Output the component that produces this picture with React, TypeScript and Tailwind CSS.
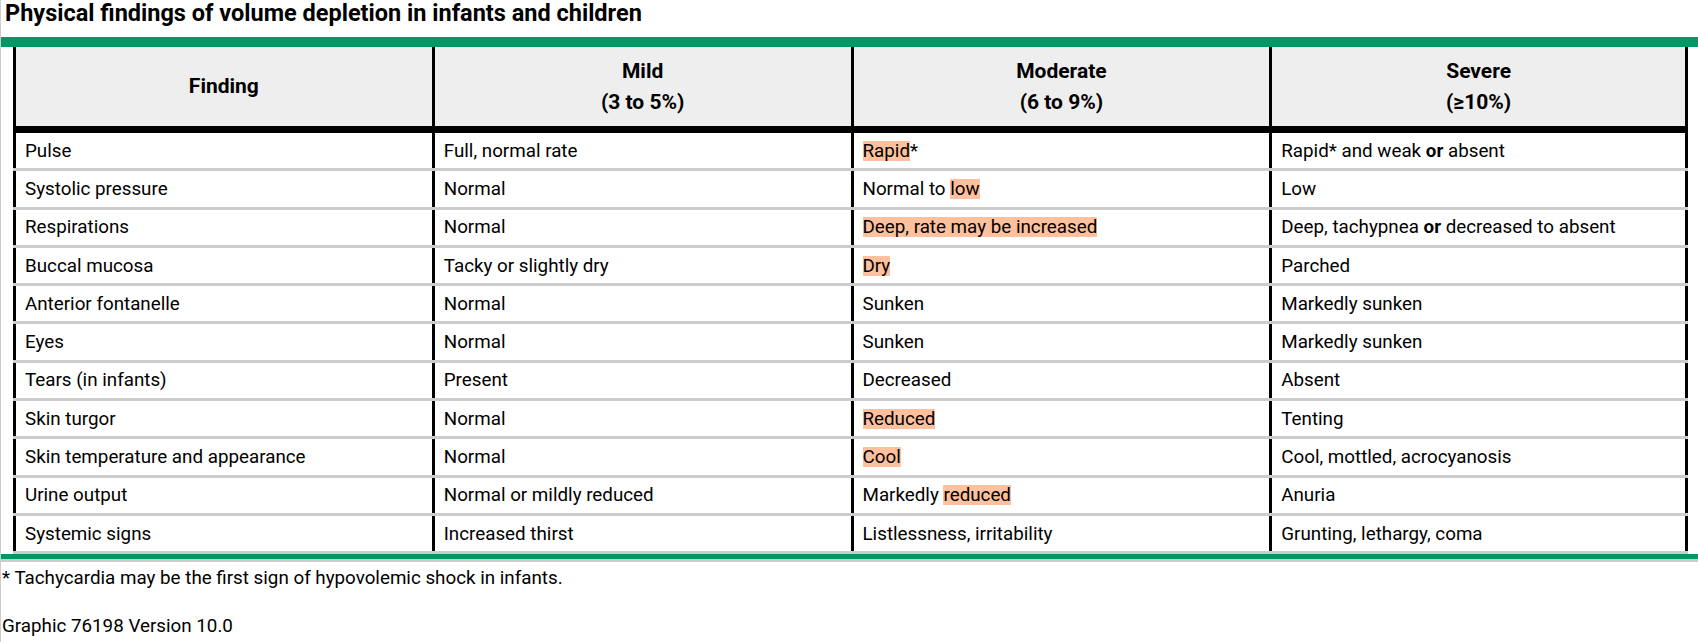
import React from "react"

type Cell = React.ReactNode

const Hl = ({ children }: { children: React.ReactNode }) => (
  <span className="inline-block bg-[#fec09d] leading-[20px]">{children}</span>
)

const rows: Cell[][] = [
  ["Pulse", "Full, normal rate", <><Hl>Rapid</Hl>*</>, <>Rapid* and weak <b>or</b> absent</>],
  ["Systolic pressure", "Normal", <>Normal to <Hl>low</Hl></>, "Low"],
  ["Respirations", "Normal", <Hl>Deep, rate may be increased</Hl>, <>Deep, tachypnea <b>or</b> decreased to absent</>],
  ["Buccal mucosa", "Tacky or slightly dry", <Hl>Dry</Hl>, "Parched"],
  ["Anterior fontanelle", "Normal", "Sunken", "Markedly sunken"],
  ["Eyes", "Normal", "Sunken", "Markedly sunken"],
  ["Tears (in infants)", "Present", "Decreased", "Absent"],
  ["Skin turgor", "Normal", <Hl>Reduced</Hl>, "Tenting"],
  ["Skin temperature and appearance", "Normal", <Hl>Cool</Hl>, "Cool, mottled, acrocyanosis"],
  ["Urine output", "Normal or mildly reduced", <>Markedly <Hl>reduced</Hl></>, "Anuria"],
  ["Systemic signs", "Increased thirst", "Listlessness, irritability", "Grunting, lethargy, coma"],
]

const headers = [
  ["Finding"],
  ["Mild", "(3 to 5%)"],
  ["Moderate", "(6 to 9%)"],
  ["Severe", "(≥10%)"],
]

export default function App() {
  return (
    <div className="h-[642px] w-[1698px] overflow-hidden border-l border-[#cccccc] bg-white font-['Roboto',sans-serif] text-black">
      {/* Title */}
      <div className="h-[37px] pl-[4px] text-[23.5px] leading-[26px] font-bold">
        Physical findings of volume depletion in infants and children
      </div>
      <div className="h-[10px] bg-[#009966]" />

      {/* Table */}
      <div className="ml-[12px] mr-[10px]">
        <div className="grid grid-cols-4 border-b-[7px] border-black">
          {headers.map((h, i) => (
            <div
              key={i}
              className={`flex h-[79px] flex-col items-center justify-center border-l-[3px] border-black bg-[#eeeeee] text-[21px] leading-[31px] font-bold ${
                i === 3 ? "border-r-[3px]" : ""
              }`}
            >
              {h.map((line) => (
                <div key={line}>{line}</div>
              ))}
            </div>
          ))}
        </div>

        {rows.map((row, r) => (
          <div key={r} className="border-b-[3px] border-[#cccccc]">
            <div className="grid grid-cols-4">
              {row.map((cell, c) => (
                <div
                  key={c}
                  className={`flex h-[35.3px] items-center border-l-[3px] border-black pl-[9px] text-[18.8px] leading-[22px] ${
                    c === 3 ? "border-r-[3px]" : ""
                  }`}
                >
                  <span>{cell}</span>
                </div>
              ))}
            </div>
          </div>
        ))}
      </div>

      <div className="h-[5px] bg-[#009966]" />
      <div className="h-[3px] bg-[#cccccc]" />

      {/* Footnotes */}
      <div className="mt-[5px] pl-[1px] text-[18.8px] leading-[22px]">
        * Tachycardia may be the first sign of hypovolemic shock in infants.
      </div>
      <div className="mt-[26px] pl-[1px] text-[18.8px] leading-[22px]">Graphic 76198 Version 10.0</div>
    </div>
  )
}
